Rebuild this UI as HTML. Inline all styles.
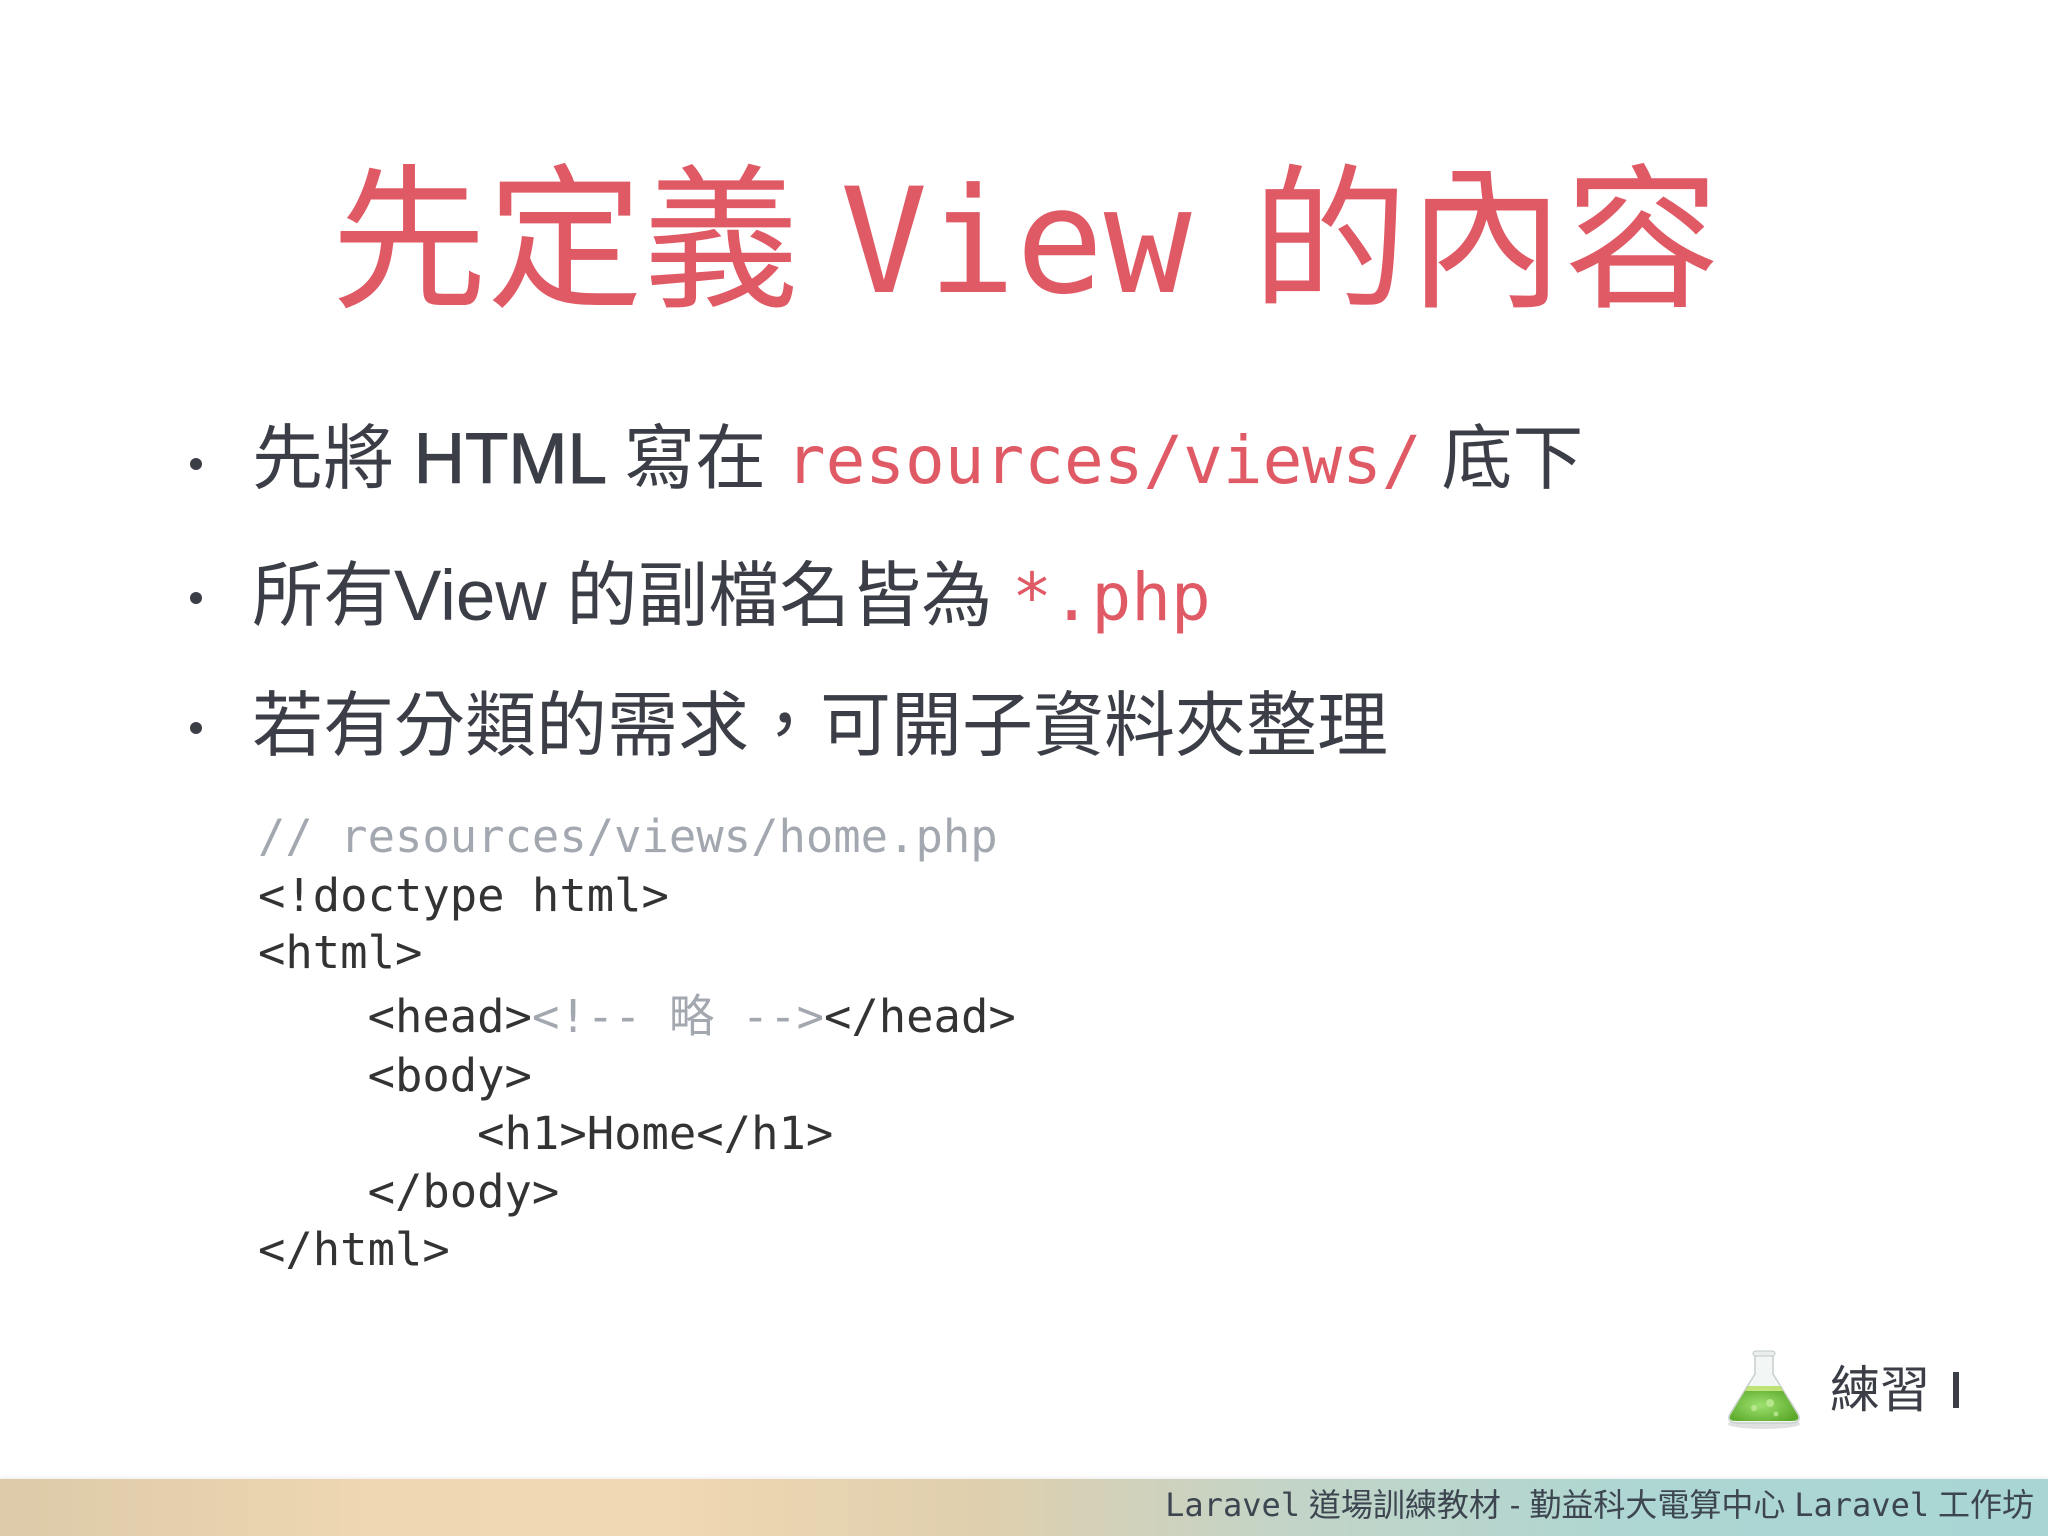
<!DOCTYPE html>
<html><head><meta charset="utf-8">
<style>
html,body{margin:0;padding:0;}
body{width:2048px;height:1536px;position:relative;background:#fff;overflow:hidden;
font-family:"Liberation Sans","Noto Sans CJK TC",sans-serif;}
.a{position:absolute;white-space:pre;}
.m{font-family:"DejaVu Sans Mono","Liberation Mono","Noto Sans CJK TC",monospace;}
.t{top:162px;font-size:156px;line-height:160px;color:#e05a66;}
.tm{font-size:146px;}
.b{left:252px;font-size:71px;line-height:80px;color:#3b3e46;}
.b .m{font-size:66px;color:#e05a66;}
.dot{position:absolute;left:190px;width:12px;height:12px;border-radius:50%;background:#3b3e46;}
.c{left:258px;font-size:45.5px;line-height:60px;color:#333;}
.g{color:#a3a8b0;}
.foot{position:absolute;left:0;top:1479px;width:2048px;height:57px;
background:linear-gradient(90deg,#dccaa8 0%,#eed7b2 18%,#f0d8b2 32%,#dfcfae 48%,#c4d4c6 62%,#aed6d2 80%,#a8d6d4 100%);
box-shadow:0 -2px 4px rgba(0,0,0,0.06);}
.ft{right:14px;top:1484px;font-size:32px;line-height:42px;color:#3d4650;}
</style></head><body>
<div class="a t" style="left:331px">先定義</div>
<div class="a t m tm" style="left:840px">View</div>
<div class="a t" style="left:1252px">的內容</div>

<div class="dot" style="top:458px"></div>
<div class="a b" style="top:420px">先將 <span style="-webkit-text-stroke:1px #3b3e46">HTML</span> 寫在 <span class="m">resources/views/</span> 底下</div>
<div class="dot" style="top:592px"></div>
<div class="a b" style="top:557px">所有View 的副檔名皆為 <span class="m">*.php</span></div>
<div class="dot" style="top:722px"></div>
<div class="a b" style="top:687px">若有分類的需求，可開子資料夾整理</div>

<div class="a c m g" style="top:807px">// resources/views/home.php</div>
<div class="a c m" style="top:866px">&lt;!doctype html&gt;</div>
<div class="a c m" style="top:923px">&lt;html&gt;</div>
<div class="a c m" style="top:987px">    &lt;head&gt;<span class="g">&lt;!-- 略 --&gt;</span>&lt;/head&gt;</div>
<div class="a c m" style="top:1046px">    &lt;body&gt;</div>
<div class="a c m" style="top:1104px">        &lt;h1&gt;Home&lt;/h1&gt;</div>
<div class="a c m" style="top:1162px">    &lt;/body&gt;</div>
<div class="a c m" style="top:1220px">&lt;/html&gt;</div>

<svg class="a" style="left:1722px;top:1348px" width="84" height="82" viewBox="0 0 84 82">
<defs>
<radialGradient id="gl" cx="0.45" cy="0.55" r="0.6"><stop offset="0" stop-color="#9ee070"/><stop offset="1" stop-color="#5aa828"/></radialGradient>
</defs>
<ellipse cx="42" cy="76" rx="36" ry="5" fill="#000" opacity="0.12"/>
<path d="M33 6 L51 6 L51 26 L76 66 Q80 74 70 75 L14 75 Q4 74 8 66 L33 26 Z" fill="#f2f6f4" stroke="#c8cfcc" stroke-width="1.5"/>
<path d="M26 38 L58 38 L75 66 Q79 73 70 73 L14 73 Q5 73 9 66 Z" fill="url(#gl)"/>
<path d="M26 38 L58 38 L61 43 L23 43 Z" fill="#d4f08a" opacity="0.8"/>
<circle cx="32" cy="60" r="3" fill="#c8f0a0" opacity="0.7"/>
<circle cx="48" cy="55" r="4" fill="#c8f0a0" opacity="0.7"/>
<circle cx="54" cy="66" r="2.5" fill="#c8f0a0" opacity="0.7"/>
<rect x="31" y="3" width="22" height="5" rx="2.5" fill="#e8eeec" stroke="#c0c8c4"/>
</svg>
<div class="a" style="left:1830px;top:1360px;font-size:50px;line-height:60px;color:#3b3e46">練習</div>
<div class="a" style="left:1953px;top:1372px;width:6px;height:36px;background:#3b3e46"></div>

<div class="foot"></div>
<div class="a ft"><span class="m">Laravel</span> 道場訓練教材 - 勤益科大電算中心 <span class="m">Laravel</span> 工作坊</div>
</body></html>
